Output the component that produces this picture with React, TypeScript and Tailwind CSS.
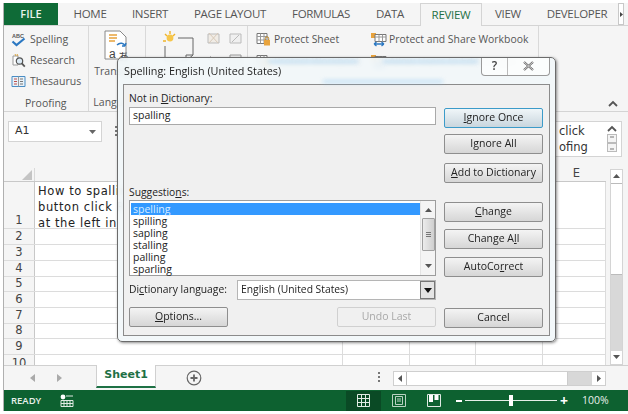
import { ReactNode } from 'react'

const sans = 'font-["Open_Sans","Noto_Sans",sans-serif]'

function Tab({ label, className = '' }: { label: string; className?: string }) {
  return <div className={`flex items-center justify-center text-[11.5px] tracking-[-0.3px] text-[#555] ${className}`}>{label}</div>
}

function DialogButton({ children, disabled, primary }: { children: ReactNode; disabled?: boolean; primary?: boolean }) {
  return (
    <div
      className={`flex h-[20px] w-[99px] items-center justify-center rounded-[2px] border text-[10.5px] ${
        disabled
          ? 'border-[#d0d0d0] bg-[#f0f0f0] text-[#a8a8a8]'
          : primary
            ? 'border-[#3c9bc9] bg-gradient-to-b from-[#f0f6f9] to-[#c9d6de] text-[#222]'
            : 'border-[#8e8e8e] bg-gradient-to-b from-[#f4f4f4] to-[#d6d6d6] text-[#222]'
      }`}
    >
      <span>{children}</span>
    </div>
  )
}

function SmallIcon({ kind }: { kind: 'spell' | 'research' | 'thes' }) {
  if (kind === 'spell')
    return (
      <svg width="15" height="15" viewBox="0 0 15 15" className="shrink-0">
        <text x="1" y="5.5" fontSize="5.5" fontWeight="700" fill="#555" fontFamily="Liberation Sans">ABC</text>
        <path d="M1.5 9.5 L5.5 13 L13.5 6.5" stroke="#2b78c2" strokeWidth="2.2" fill="none" />
      </svg>
    )
  if (kind === 'research')
    return (
      <svg width="15" height="15" viewBox="0 0 15 15" className="shrink-0">
        <path d="M2 3h5v9H2z" fill="#fff" stroke="#999" />
        <path d="M4 1l1 2M6 1l1 2" stroke="#d9a441" />
        <circle cx="8.5" cy="8" r="3.2" fill="#dbe9f4" stroke="#555" strokeWidth="1.2" />
        <path d="M10.8 10.4l3 3.2" stroke="#555" strokeWidth="1.8" />
      </svg>
    )
  return (
    <svg width="15" height="15" viewBox="0 0 15 15" className="shrink-0">
      <path d="M1 2.5h13v10H1z" fill="#e8f1f8" stroke="#4a8dc4" />
      <path d="M7.5 2.5v10" stroke="#999" />
      <path d="M3 5h3M3 7.5h3M3 10h3" stroke="#c0504d" />
      <path d="M9 5h3M9 7.5h3M9 10h3" stroke="#777" />
    </svg>
  )
}

function LockIcon() {
  return (
    <svg width="15" height="15" viewBox="0 0 15 15" className="shrink-0">
      <path d="M1 1.5h10v10H1z" fill="#fff" stroke="#777" />
      <path d="M1 4.5h10M1 8h10M4.5 1.5v10M8 1.5v10" stroke="#999" />
      <rect x="8" y="8" width="6" height="5.5" fill="#e8a33d" />
      <path d="M9.3 8V6.5a1.7 1.7 0 0 1 3.4 0V8" stroke="#b9801f" fill="none" />
    </svg>
  )
}

function ShareIcon() {
  return (
    <svg width="17" height="15" viewBox="0 0 17 15" className="shrink-0">
      <rect x="1" y="1" width="5" height="5" fill="#e8a33d" />
      <path d="M5 2.5h11v7H5z" fill="#fff" stroke="#777" />
      <path d="M5 5h11M9 2.5v7M12.5 2.5v7" stroke="#999" />
      <path d="M4 12h10M4 12l2.5-2M4 12l2.5 2M14 12l-2.5-2M14 12l-2.5 2" stroke="#2b78c2" strokeWidth="1.3" fill="none" />
    </svg>
  )
}

function Ribbon() {
  return (
    <div className="flex h-[86px] border-b border-[#d4d4d4] text-[#555]">
      <div className="flex w-[85px] flex-col border-r border-[#d9d9d9] pl-[7px] pt-[3px]">
        <div className="flex h-[21px] shrink-0 items-center gap-[4px] text-[10.5px]"><SmallIcon kind="spell" />Spelling</div>
        <div className="flex h-[21px] shrink-0 items-center gap-[4px] text-[10.5px]"><SmallIcon kind="research" />Research</div>
        <div className="flex h-[21px] shrink-0 items-center gap-[4px] text-[10.5px]"><SmallIcon kind="thes" />Thesaurus</div>
        <div className="mt-[4px] pl-[14px] text-[10.5px]">Proofing</div>
      </div>
      <div className="flex w-[57px] flex-col items-center border-r border-[#d9d9d9] pt-[4px] text-[10.5px]">
        <svg width="32" height="34" viewBox="0 0 32 34" className="shrink-0">
          <path d="M4 1h15l6 6v22H4z" fill="#fff" stroke="#888" />
          <path d="M8 5h8M8 8h8M8 11h6" stroke="#e8a33d" strokeWidth="1.3" />
          <path d="M16 15c3-3 7-2 8 1M24 16l1-3M24 16l-3 0" stroke="#2b78c2" strokeWidth="1.4" fill="none" />
          <text x="8" y="28" fontSize="12" fill="#444" fontFamily="Liberation Sans">a</text>
          <text x="17" y="31" fontSize="11" fill="#444" fontFamily="Noto Sans CJK JP">あ</text>
        </svg>
        <div className="leading-[14px]">Translate</div>
        <div className="mt-[17px]">Language</div>
      </div>
      <div className="flex w-[102px] border-r border-[#d9d9d9] pl-[16px] pt-[4px]">
        <svg width="32" height="34" viewBox="0 0 32 34" className="shrink-0">
          <path d="M1 11h3M8 1v3M3 4l2 2M13 4l-2 2" stroke="#f0b429" strokeWidth="1.4" />
          <circle cx="8" cy="8" r="3.4" fill="#f6c64a" />
          <path d="M16 8h15v17l-7 6H3V16" fill="none" stroke="#666" />
          <path d="M24 31v-6h7" fill="none" stroke="#666" />
        </svg>
        <div className="ml-[12px] flex flex-col gap-[6px] pt-[1px]">
          <div className="flex gap-[7px]">
            <svg width="15" height="15" viewBox="0 0 15 15"><path d="M2 3h11v9H2z" fill="#f0ece6" stroke="#bbb" /><path d="M3 2l9 10M12 2L3 12" stroke="#d8c9b8" /></svg>
            <svg width="15" height="15" viewBox="0 0 15 15"><path d="M2 3h11v9H2z" fill="#f0f0f0" stroke="#bbb" /><path d="M4 11l7-7" stroke="#bbb" /></svg>
          </div>
          <div className="flex gap-[7px]">
            <svg width="15" height="15" viewBox="0 0 15 15"><path d="M2 7h11M2 7l3-3M2 7l3 3" stroke="#bbb" fill="none" /></svg>
            <svg width="15" height="15" viewBox="0 0 15 15"><path d="M2 3h11v9H2z" fill="#eee" stroke="#999" /></svg>
          </div>
        </div>
      </div>
      <div className="flex w-[291px] flex-col border-r border-[#d9d9d9] pl-[8px] pt-[3px] text-[10.4px]">
        <div className="flex h-[22px] shrink-0 items-center">
          <div className="flex w-[114px] items-center gap-[3px] whitespace-nowrap"><LockIcon />Protect Sheet</div>
          <div className="flex items-center gap-[2px] whitespace-nowrap"><ShareIcon />Protect and Share Workbook</div>
        </div>
        <div className="flex h-[22px] shrink-0 items-center">
          <div className="flex w-[114px] items-center gap-[3px] whitespace-nowrap"><LockIcon />Protect Workbook</div>
          <div className="flex items-center gap-[2px] whitespace-nowrap"><ShareIcon />Allow Users to Edit Ranges</div>
        </div>
      </div>
      <div className="flex flex-1 items-end justify-end pb-[4px] pr-[10px]">
        <svg width="10" height="7" viewBox="0 0 10 7"><path d="M1 6l4-4 4 4" stroke="#555" strokeWidth="1.8" fill="none" /></svg>
      </div>
    </div>
  )
}

function FormulaBar() {
  return (
    <div className="flex h-[56px] bg-[#f5f5f5] pl-[4px] pr-[6px] pt-[9px]">
      <div className="flex h-[21px] w-[94px] items-center justify-between border border-[#d4d4d4] bg-white pl-[6px] pr-[5px] font-['DejaVu_Sans',sans-serif] text-[11px] text-[#333]">
        A1
        <svg width="7" height="4" viewBox="0 0 7 4"><path d="M0 0h7L3.5 4z" fill="#666" /></svg>
      </div>
      <div className="ml-[13px] mt-[5px] flex w-[11px] flex-col gap-[2px]">
        <div className="h-[2px] w-[2px] bg-[#777]" />
        <div className="h-[2px] w-[2px] bg-[#777]" />
        <div className="h-[2px] w-[2px] bg-[#777]" />
      </div>
      <div className="flex h-[36px] flex-1 justify-between border border-[#d4d4d4] bg-white pl-[4px] pr-[2px] font-['DejaVu_Sans',sans-serif] text-[11.5px] leading-[15.5px] text-[#333]">
        <div className="flex-1 whitespace-nowrap pl-[428px] pt-[2px]">click<br />ofing</div>
        <div className="flex w-[14px] flex-col items-center pt-[3px]">
          <svg width="10" height="7" viewBox="0 0 10 7"><path d="M1 6l4-4 4 4" stroke="#555" strokeWidth="1.8" fill="none" /></svg>
          <svg width="10" height="9" viewBox="0 0 10 9" className="mt-[2px]"><rect x="0.5" y="0.5" width="9" height="8" fill="#f4f4f4" stroke="#bbb" /><path d="M3 3h4" stroke="#777" /></svg>
          <svg width="10" height="9" viewBox="0 0 10 9"><rect x="0.5" y="0.5" width="9" height="8" fill="#f4f4f4" stroke="#bbb" /><path d="M3 6h4" stroke="#777" /></svg>
        </div>
      </div>
    </div>
  )
}

const colClass = ['w-[308px]', 'w-[67px]', 'w-[66px]', 'w-[67px]', 'w-[63px]']

function GridRow({ n, h, first, cut }: { n: number; h: string; first?: boolean; cut?: boolean }) {
  return (
    <div className={`flex shrink-0 border-b border-[#dcdcdc] ${h}`}>
      <div className={`flex w-[31px] shrink-0 justify-center border-r border-[#c8c8c8] bg-[#f5f5f5] text-[11.5px] leading-[15px] text-[#444] ${first ? 'items-end' : cut ? 'items-start pt-[1px]' : 'items-center'}`}>{n}</div>
      {colClass.map((w, i) => (
        <div key={i} className={`${w} border-r border-[#dcdcdc] bg-white`}>
          {first && i === 0 && (
            <div className="pl-[3px] pt-[1px] text-[11.5px] leading-[16px] tracking-[0.6px] text-[#222]">
              How to spalling<br />button click R<br />at the left in
            </div>
          )}
        </div>
      ))}
    </div>
  )
}

function Sheet() {
  const rows: [number, string][] = [
    [2, 'h-[16px]'],
    [3, 'h-[16px]'],
    [4, 'h-[16px]'],
    [5, 'h-[15px]'],
    [6, 'h-[16px]'],
    [7, 'h-[16px]'],
    [8, 'h-[15px]'],
    [9, 'h-[16px]'],
  ]
  return (
    <div className="flex h-[197px] font-['DejaVu_Sans',sans-serif]">
      <div className="flex w-[602px] shrink-0 flex-col overflow-hidden">
        <div className="flex h-[14px] shrink-0 border-b border-[#c8c8c8] bg-[#f5f5f5]">
          <div className="relative w-[31px] border-r border-[#d9d9d9]">
            <svg width="10" height="10" viewBox="0 0 10 10" className="absolute bottom-[1px] right-[2px]"><path d="M0 10L10 0v10z" fill="#c4c4c4" /></svg>
          </div>
          <div className="flex flex-1 items-center justify-end pr-[26px] text-[11.5px] text-[#444]">E</div>
        </div>
        <GridRow n={1} h="h-[47px]" first />
        {rows.map(([n, h]) => (
          <GridRow key={n} n={n} h={h} />
        ))}
        <GridRow n={10} h="h-[16px]" cut />
      </div>
      <div className="ml-[4px] mt-px flex w-[13px] flex-col border border-[#d4d4d4] bg-white">
        <div className="flex h-[13px] items-center justify-center"><svg width="7" height="4" viewBox="0 0 7 4"><path d="M0 4h7L3.5 0z" fill="#555" /></svg></div>
        <div className="h-[92px] border-y border-[#bbb] bg-white" />
        <div className="flex-1 bg-[#d8d8d8]" />
        <div className="flex h-[13px] items-center justify-center"><svg width="7" height="4" viewBox="0 0 7 4"><path d="M0 0h7L3.5 4z" fill="#555" /></svg></div>
      </div>
    </div>
  )
}

function SheetTabs() {
  return (
    <div className="flex h-[26px] items-start border-t border-[#d0d0d0] bg-[#f5f5f5]">
      <div className="flex w-[92px] items-center gap-[22px] pl-[26px] pt-[8px]">
        <svg width="5" height="8" viewBox="0 0 5 8"><path d="M5 0v8L0 4z" fill="#aaa" /></svg>
        <svg width="5" height="8" viewBox="0 0 5 8"><path d="M0 0v8l5-4z" fill="#aaa" /></svg>
      </div>
      <div className="-mt-px flex h-[23px] w-[60px] items-center justify-center border-x border-b-2 border-[#d0d0d0] border-b-[#1e7145] bg-white font-['DejaVu_Sans',sans-serif] text-[11px] font-bold text-[#1e7145]">Sheet1</div>
      <div className="ml-[30px] mt-[4px]">
        <svg width="16" height="16" viewBox="0 0 16 16"><circle cx="8" cy="8" r="6.8" fill="none" stroke="#666" strokeWidth="1.2" /><path d="M4.5 8h7M8 4.5v7" stroke="#666" strokeWidth="1.8" /></svg>
      </div>
      <div className="ml-auto mr-[22px] flex items-start">
        <div className="mr-[13px] mt-[6px] flex flex-col gap-[2px]">
          <div className="h-[2px] w-[2px] bg-[#777]" />
          <div className="h-[2px] w-[2px] bg-[#777]" />
          <div className="h-[2px] w-[2px] bg-[#777]" />
        </div>
        <div className="mt-[5px] flex h-[15px] w-[213px] border border-[#cfcfcf] bg-white">
          <div className="flex w-[13px] items-center justify-center border-r border-[#bbb]"><svg width="4" height="7" viewBox="0 0 4 7"><path d="M4 0v7L0 3.5z" fill="#555" /></svg></div>
          <div className="w-[161px] border-r border-[#ccc]" />
          <div className="flex-1 bg-[#d8d8d8]" />
          <div className="flex w-[13px] items-center justify-center"><svg width="4" height="7" viewBox="0 0 4 7"><path d="M0 0v7l4-3.500z" fill="#555" /></svg></div>
        </div>
      </div>
    </div>
  )
}

function StatusBar() {
  return (
    <div className="flex h-[21px] items-center bg-[#0d6130] text-white">
      <div className="w-[55px] pl-[7px] text-[9.5px] font-semibold text-[#e8f0ea]">READY</div>
      <svg width="14" height="13" viewBox="0 0 14 13" className="ml-[1px]">
        <circle cx="3" cy="3" r="2.4" fill="#fff" />
        <path d="M6 2h7M1 6.500h12v6H1z" stroke="#dfe9e2" fill="none" />
        <path d="M4 6.500v6M7 6.500v6M10 6.500v6M1 9.500h12" stroke="#dfe9e2" />
      </svg>
      <div className="ml-[272px] flex h-[20px] w-[35px] items-center justify-center bg-[#0a4a25]">
        <svg width="13" height="13" viewBox="0 0 13 13"><path d="M.5.5h12v12H.5zM.5 4.500h12M.5 8.500h12M4.500.5v12M8.500.5v12" stroke="#e2ece5" fill="none" /></svg>
      </div>
      <div className="flex w-[35px] justify-center">
        <svg width="14" height="13" viewBox="0 0 14 13"><path d="M.5.5h13v12H.5z" stroke="#b9d2c2" fill="none" /><path d="M3.500 2.500h7v8h-7zM5 5h4M5 7h4" stroke="#b9d2c2" fill="none" /></svg>
      </div>
      <div className="flex w-[35px] justify-center">
        <svg width="14" height="13" viewBox="0 0 14 13"><path d="M.5.5h13v12H.5z" stroke="#dfe9e2" fill="none" /><path d="M2 1h4v7H2zM7.500 1h4v5h-4z" fill="#fff" /></svg>
      </div>
      <div className="ml-[5px] h-[2px] w-[6px] bg-white" />
      <div className="relative ml-[3px] h-px w-[92px] bg-[#e5efe8]">
        <div className="absolute left-[44px] top-[-5px] h-[11px] w-[4px] bg-white" />
      </div>
      <div className="ml-[3px] text-[14px] font-bold leading-none">+</div>
      <div className="ml-[14px] text-[10.5px] text-[#e8f0ea]">100%</div>
    </div>
  )
}

function Dialog() {
  const under = 'underline underline-offset-[1px]'
  return (
    <div className={`absolute left-[117px] top-[57px] h-[285px] w-[439px] overflow-hidden rounded-[5px] border border-[#6b6b6b] bg-[#f2f7fa]/90 shadow-[1px_1px_3px_rgba(0,0,0,0.45)] backdrop-blur-[3px] ${sans}`}>
      <div className="relative h-[26px]">
        <div className="absolute left-[150px] top-[2px] h-[3px] w-[90px] bg-[#8cc4ec] opacity-50 blur-[2px]" />
        <div className="absolute left-[265px] top-[2px] h-[3px] w-[95px] bg-[#8cc4ec] opacity-50 blur-[2px]" />
        <div className="absolute left-[205px] top-[22px] h-[3px] w-[120px] bg-[#8cc4ec] opacity-50 blur-[2px]" />
        <div className="absolute left-[6px] top-[5px] text-[10.8px] text-[#222]">Spelling: English (United States)</div>
        <div className="absolute right-[5px] top-[-1px] flex h-[19px] w-[69px] overflow-hidden rounded-b-[4px] border border-t-0 border-[#9a9a9a] bg-white/70">
          <div className="flex w-[26px] items-center justify-center border-r border-[#bbb] text-[12px] font-semibold text-[#444]">?</div>
          <div className="flex flex-1 items-center justify-center">
            <svg width="13" height="10" viewBox="0 0 13 10"><path d="M2 1l9 8M11 1l-9 8" stroke="#666" strokeWidth="2.2" /><path d="M2 1l9 8M11 1l-9 8" stroke="#fff" strokeWidth="0.7" /></svg>
          </div>
        </div>
      </div>
      <div className="mx-[5px] flex h-[252px] gap-[8px] border border-[#8b8b8b] bg-[#f0f0f0] pl-[5px] pt-[6px]">
        <div className="flex w-[307px] flex-col">
          <div className="text-[10.3px] leading-[15px] text-[#222]">Not in <span className={under}>D</span>ictionary:</div>
          <div className="mt-px flex h-[18px] items-center border border-[#a9a9a9] bg-white pl-[3px] text-[10.5px] text-[#222]">spalling</div>
          <div className="mt-[60px] text-[10.3px] leading-[15px] text-[#222]">Suggestio<span className={under}>n</span>s:</div>
          <div className="flex h-[76px] border border-[#9c9c9c] bg-white">
            <div className="flex-1 pl-px pt-[2px] text-[10.5px] leading-[12px] text-[#222]">
              <div className="bg-[#3399ff] pl-[2px] text-[#d8ecff]">spelling</div>
              {['spilling', 'sapling', 'stalling', 'palling', 'sparling'].map((s) => (
                <div key={s} className="pl-[2px]">{s}</div>
              ))}
            </div>
            <div className="flex w-[15px] flex-col items-center border-l border-[#e4e4e4] bg-[#f4f4f4] py-[7px]">
              <svg width="7" height="4" viewBox="0 0 7 4"><path d="M0 4h7L3.5 0z" fill="#555" /></svg>
              <div className="mt-[6px] flex h-[33px] w-[13px] flex-col items-center justify-center gap-px rounded-[1px] border border-[#a0a0a0] bg-gradient-to-r from-[#ececec] to-[#cfcfcf]">
                <div className="h-px w-[5px] bg-[#777]" />
                <div className="h-px w-[5px] bg-[#777]" />
                <div className="h-px w-[5px] bg-[#777]" />
              </div>
              <svg width="7" height="4" viewBox="0 0 7 4" className="mt-auto"><path d="M0 0h7L3.5 4z" fill="#555" /></svg>
            </div>
          </div>
          <div className="mt-[4px] flex h-[20px] items-center justify-between text-[10.3px] text-[#222]">
            <span>Di<span className={under}>c</span>tionary language:</span>
            <div className="flex h-[20px] w-[199px] items-center justify-between border border-[#b5b5b5] bg-white pl-[3px]">
              English (United States)
              <div className="flex h-[18px] w-[15px] items-center justify-center border border-[#777] bg-[#e4e4e4]">
                <svg width="8" height="5" viewBox="0 0 8 5"><path d="M0 0h8L4 5z" fill="#111" /></svg>
              </div>
            </div>
          </div>
          <div className="mt-[7px] flex justify-between">
            <DialogButton><span className={under}>O</span>ptions...</DialogButton>
            <DialogButton disabled>Undo Last</DialogButton>
          </div>
        </div>
        <div className="flex w-[99px] flex-col pt-[17px]">
          <DialogButton primary><span className={under}>I</span>gnore Once</DialogButton>
          <div className="mt-[6px]"><DialogButton>I<span className={under}>g</span>nore All</DialogButton></div>
          <div className="mt-[9px]"><DialogButton><span className={under}>A</span>dd to Dictionary</DialogButton></div>
          <div className="mt-[19px]"><DialogButton><span className={under}>C</span>hange</DialogButton></div>
          <div className="mt-[7px]"><DialogButton>Change A<span className={under}>l</span>l</DialogButton></div>
          <div className="mt-[8px]"><DialogButton>AutoCo<span className={under}>r</span>rect</DialogButton></div>
          <div className="mt-[31px]"><DialogButton>Cancel</DialogButton></div>
        </div>
      </div>
    </div>
  )
}

export default function App() {
  return (
    <div className={`relative h-[414px] w-[628px] overflow-hidden bg-white pl-[3px] pt-[3px] ${sans}`}>
      <div className="flex h-[408px] flex-col border-l border-[#b0b0b0] bg-[#f5f5f5]">
        <div className="flex h-[23px] items-stretch border-b border-[#d4d4d4]">
          <div className="flex w-[54px] items-center justify-center bg-[#0f6b37] text-[11px] font-semibold text-[#e8f2ec]">FILE</div>
          <Tab label="HOME" className="w-[64px]" />
          <Tab label="INSERT" className="w-[56px]" />
          <Tab label="PAGE LAYOUT" className="w-[104px]" />
          <Tab label="FORMULAS" className="w-[78px]" />
          <Tab label="DATA" className="w-[60px]" />
          <Tab label="REVIEW" className="-mb-px w-[62px] border-x border-t border-[#d4d4d4] bg-[#f5f5f5] !text-[#1e7145]" />
          <Tab label="VIEW" className="w-[52px]" />
          <Tab label="DEVELOPER" className="w-[82px] pl-[4px]" />
          <div className="ml-[2px] flex h-[22px] w-[6px] items-center justify-center border border-[#c8c8c8] bg-white">
            <svg width="3" height="5" viewBox="0 0 3 5"><path d="M0 0v5l3-2.500z" fill="#444" /></svg>
          </div>
        </div>
        <Ribbon />
        <FormulaBar />
        <Sheet />
        <SheetTabs />
        <StatusBar />
      </div>
      <Dialog />
    </div>
  )
}
